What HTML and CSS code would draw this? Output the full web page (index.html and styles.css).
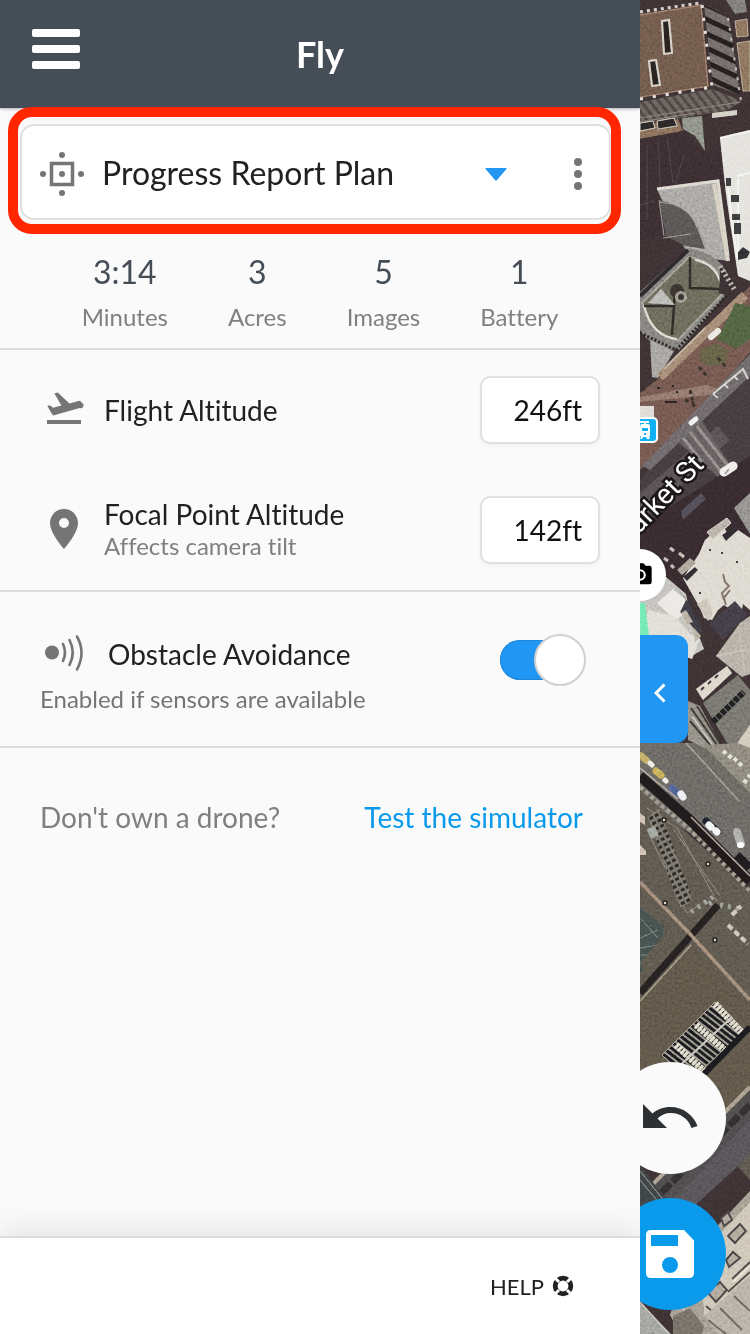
FILE: index.html
```html
<!DOCTYPE html>
<html lang="en">
<head>
<meta charset="utf-8">
<meta name="viewport" content="width=device-width, initial-scale=1">
<title>Fly</title>
<link rel="stylesheet" href="styles.css">
</head>
<body>
<div class="app">
  <main class="panel">
    <header class="topbar">
      <button class="menu" type="button" aria-label="Menu"><span></span><span></span><span></span></button>
      <h1 class="title">Fly</h1>
    </header>

    <div class="highlight">
      <div class="plan">
        <svg class="plan-icon" viewBox="0 0 44 44" aria-hidden="true">
          <rect x="11.500" y="11.500" width="21" height="21" fill="none" stroke="#757575" stroke-width="3.500"/>
          <g fill="#757575"><circle cx="22" cy="22" r="3"/><circle cx="22" cy="3" r="3"/><circle cx="22" cy="41" r="3"/><circle cx="3" cy="22" r="3"/><circle cx="41" cy="22" r="3"/></g>
        </svg>
        <button class="plan-select" type="button">
          <span>Progress Report Plan</span>
          <svg class="caret" viewBox="0 0 22 13" aria-hidden="true"><path d="M1 0h20q1 0 .4 1L12 12q-1 1-2 0L.6 1Q0 0 1 0z" fill="#2196f3"/></svg>
        </button>
        <button class="more" type="button" aria-label="More"><span></span><span></span><span></span></button>
      </div>
    </div>

    <dl class="stats">
      <div><dd>3:14</dd><dt>Minutes</dt></div>
      <div><dd>3</dd><dt>Acres</dt></div>
      <div><dd>5</dd><dt>Images</dt></div>
      <div><dd>1</dd><dt>Battery</dt></div>
    </dl>

    <section class="section">
      <div class="row">
        <svg class="row-icon" viewBox="0 0 40 40" fill="#757575" aria-hidden="true">
          <path d="M3 30h34v4H3z"/>
          <path d="M37.600 12.800a2.600 2.600 0 0 0-3.200-1.800l-9 2.400L13.800 2.500l-3.400 1 7 12.100-8.300 2.200-3.300-2.600-2.500.7 4.400 7.600 1.400 2 26.700-7.500a2.600 2.600 0 0 0 1.800-5.200z"/>
        </svg>
        <label class="label" for="flight">Flight Altitude</label>
        <input class="value" id="flight" type="text" value="246ft">
      </div>
      <div class="row">
        <svg class="row-icon" viewBox="0 0 40 40" fill="#757575" aria-hidden="true">
          <path fill-rule="evenodd" d="M20-1C12.200-1 6 5.200 6 13c0 10.500 14 26 14 26s14-15.500 14-26C34 5.200 27.800-1 20-1zm0 19a5 5 0 1 1 0-10 5 5 0 0 1 0 10z"/>
        </svg>
        <label class="label" for="focal">Focal Point Altitude<small>Affects camera tilt</small></label>
        <input class="value" id="focal" type="text" value="142ft">
      </div>
    </section>

    <section class="section obstacle">
      <div class="obstacle-text">
        <label class="obstacle-label" for="avoid">
          <svg class="row-icon" viewBox="0 0 40 40" aria-hidden="true">
            <circle cx="8" cy="18.500" r="7" fill="#757575"/>
            <path d="M19 10q4 8.500 0 17M25.500 6q6.500 12.500 0 25M33 2.500q9 16 0 33" fill="none" stroke="#757575" stroke-width="2.600" stroke-linecap="round"/>
          </svg>
          Obstacle Avoidance
        </label>
        <p>Enabled if sensors are available</p>
      </div>
      <input class="switch" id="avoid" type="checkbox" role="switch" checked>
    </section>

    <div class="simulator">
      <span>Don't own a drone?</span>
      <a href="#simulator">Test the simulator</a>
    </div>

    <footer class="footer">
      <button class="help" type="button">HELP
        <svg viewBox="0 0 22 22" aria-hidden="true">
          <circle cx="11" cy="11" r="7.800" fill="none" stroke="#212121" stroke-width="4.800"/>
          <path d="M2 2l5 5M20 2l-5 5M2 20l5-5M20 20l-5-5" stroke="#fff" stroke-width="3"/>
        </svg>
      </button>
    </footer>
  </main>

  <aside class="map" aria-label="Map">
    <svg class="imagery" viewBox="0 0 110 1334" preserveAspectRatio="xMinYMin slice" aria-hidden="true">
      <defs>
        <pattern id="slatA" width="12" height="13" patternUnits="userSpaceOnUse" patternTransform="rotate(25)"><rect width="12" height="13" fill="#605b5a"/><rect width="12" height="5" fill="#201a1a"/></pattern>
        <pattern id="slatB" width="7" height="9" patternUnits="userSpaceOnUse" patternTransform="rotate(-38)"><rect width="7" height="9" fill="#5a5450"/><rect width="3" height="9" fill="#423b38"/></pattern>
        <pattern id="slatC" width="5" height="5" patternUnits="userSpaceOnUse" patternTransform="rotate(38)"><rect width="5" height="5" fill="#858078"/><rect width="5" height="3" fill="#16171a"/></pattern>
        <pattern id="slatD" width="6" height="6" patternUnits="userSpaceOnUse" patternTransform="rotate(62)"><rect width="6" height="6" fill="#69655e"/><rect width="3" height="4" fill="#25231f"/></pattern>
        <pattern id="cross" width="9" height="9" patternUnits="userSpaceOnUse" patternTransform="rotate(52)"><rect width="9" height="9" fill="#565052"/><rect width="9" height="3" fill="#7c7774"/></pattern>
        <filter id="grain" x="0" y="0" width="100%" height="100%"><feTurbulence type="fractalNoise" baseFrequency=".4" numOctaves="3" seed="4"/><feColorMatrix type="saturate" values="0"/><feComponentTransfer><feFuncA type="linear" slope="0" intercept="1"/></feComponentTransfer></filter>
      </defs>
      <g class="land">
        <rect width="110" height="1334" fill="#342a2c"/>
        <!-- brown roof with vents and louvred edges -->
        <path d="M0 15L60 5l8 80-68 11z" fill="#604d41"/>
        <path d="M0 15L61 5l7 81-68 11" fill="none" stroke="#8a6c5c" stroke-width="1.500"/>
        <path d="M0 12L60 3" stroke="#c7c2b8" stroke-width="3" stroke-dasharray="3 4"/>
        <path d="M0 99L72 87M62 5l10 82" stroke="#ded9cf" stroke-width="3" stroke-dasharray="3 10"/>
        <path d="M22 21l7-1 3 33-8 1zM9 61l7-1 4 25-8 1z" fill="#221d1b" stroke="#cfc8bb" stroke-width="2"/>
        <path d="M64 5l25 13 11 77-27-10z" fill="url(#slatA)"/>
        <path d="M88 18l13 83" stroke="#a9a49d" stroke-width="2" stroke-dasharray="3 7"/>
        <path d="M0 102l72-13 30 12-14 9-88 15z" fill="url(#slatB)"/>
        <path d="M86 0h19l2 12-12 2z" fill="#6b6a67"/>
        <path d="M95 21l12-2 1 17-11 1zM97 43l13-2v50h-7z" fill="#76624f" stroke="#a29381"/>
        <path d="M0 118l100-16M0 122l55-9" stroke="#787067" stroke-width="1"/>
        <path d="M0 126l38-7 5 12-43 8z" fill="#745e4c"/>
        <path d="M0 123l13-2 2 7-15 3zM17 121l17-3 3 8-19 3z" fill="#242222" stroke="#c0b8ab"/>
        <path d="M42 118l20-2 3 35-10-15-12-7z" fill="#797b73"/>
        <path d="M72 113l25-3v5l-25 3z" fill="#c9c4b9"/>
        <path d="M0 139l43-8 20 20h17l3 33-66 5 4 46-21 5z" fill="#32272a"/>
        <path d="M18 139l3 60M27 137l6 46M44 155l-9 30M0 205l14-4M7 145v75" stroke="#453a3d"/>
        <!-- pale buildings -->
        <path d="M80 138l30-7v150l-12-5-12-82z" fill="#dedcd5"/>
        <path d="M80 138l30-7M97 176l13-3M98 179v80M88 188l9 70" stroke="#f2f1ec" stroke-width="2" fill="none"/>
        <path d="M86 178h5v8h-5zM91 195h8v7h-8zM92 214h8v6h-8zM94 223h7v11h-7z" fill="#343436"/>
        <path d="M98 252l5-5 7 5-3 6-9 2z" fill="#29292b"/>
        <path d="M17 189l61-8 11 80-16-2-27-8z" fill="#96948f"/>
        <path d="M17 189l61-8 10 75" fill="none" stroke="#d6d1c5" stroke-width="3"/>
        <path d="M74 184l14 77" stroke="#cec6b5" stroke-width="4"/>
        <path d="M19 200q24 5 33 18 5 8 13 31l-20-3-19-10z" fill="#4c4949"/>
        <path d="M20 202q24 2 33 17 5 8 13 28M23 238l28-4M19 200l5 36" fill="none" stroke="#898681"/>
        <!-- courtyard -->
        <path d="M0 292l48-44q40 7 43 41l-52 61q-29-2-39-20z" fill="#6f6e6a"/>
        <path d="M2 303l47-46q31 5 37 33l-48 50Q11 337 2 303z" fill="#5b5b4e" stroke="#908a81" stroke-width="2"/>
        <path d="M4 305q7 31 33 34M55 260q23 4 27 29" stroke="#dbd7cf" stroke-width="2" fill="none"/>
        <path d="M0 296l48-46" stroke="#262225" stroke-width="4"/>
        <path d="M50 257v31l31 1M35 290l-3 45M4 306h31" stroke="#292420" stroke-width="2.500" fill="none"/>
        <path d="M8 303l13-14 14 16z" fill="#aaa9a5"/>
        <circle cx="37" cy="291" r="7" fill="#302c29"/><circle cx="41" cy="297" r="4.500" fill="#2f2a28" stroke="#8a837d" stroke-width="3"/>
        <path d="M0 333l36 17 54-58" stroke="#211f1f" stroke-width="3" stroke-dasharray="2 2" fill="none"/>
        <path d="M80 265l14 19-6 12-9-3z" fill="#31292b"/>
        <path d="M80 266l14 23" stroke="#aca5a0" stroke-width="5" stroke-dasharray="2 3"/>
        <path d="M10 340l24 11-16 27-6-1z" fill="#92908d"/>
        <!-- brick plaza and trees -->
        <path d="M19 378l91-92v82l-40 40-70 62v-77z" fill="#634b44"/>
        <path d="M20 377l85-82" stroke="#8e7564" stroke-width="9"/>
        <path d="M24 369l42-42" stroke="#bbaa96" stroke-width="1.500"/>
        <path d="M0 397l66-12 24 8-90 9z" fill="#7c665d"/>
        <path d="M91 312l4-9 15 3v33l-14 10-19-10z" fill="#465437"/>
        <path d="M61 350l14-7 14 8-4 13-16 2-10-6z" fill="#56533c"/>
        <path d="M71 337l7-6" stroke="#e6e3dd" stroke-width="6" stroke-linecap="round"/>
        <path d="M59 367l9 10M78 358l8 9M45 400l9 3M50 390l4 17" stroke="#332927" stroke-width="3" stroke-dasharray="4 3"/>
        <path d="M3 389h2M17 388h3M32 386h2M36 392h2M25 402h12" stroke="#251e1e" stroke-width="2"/>
        <path d="M0 406h14v13H0z" fill="#d8d4cd"/>
        <!-- main street -->
        <path d="M110 352v134L0 576V480z" fill="#3a3336"/>
        <path d="M110 354v22L10 470l-8-4z" fill="#5e595b"/>
        <path d="M0 493l78-67 12 14L0 523z" fill="#4c4549"/>
        <path d="M38 442l24-21 32 50-10 11z" fill="url(#cross)"/>
        <path d="M73 394l30-25 5 10" stroke="#cac5bc" stroke-width="2" fill="none"/>
        <path d="M73 394l5 4M84 384l4 4M94 376l4 4" stroke="#ddd" stroke-width="1.500"/>
        <path d="M51 423l5-4" stroke="#eee" stroke-width="5" stroke-linecap="round"/>
        <path d="M0 526L110 456v90l-60 50-50 10z" fill="#2f2428"/>
        <path d="M84 472l9-6" stroke="#edebe7" stroke-width="9" stroke-linecap="round"/><path d="M85 474l4-5" stroke="#8a868a" stroke-width="2"/>
        <path d="M41 511l20-18 5 6-23 21z" fill="#45424b"/>
        <path d="M94 508l16-15v41z" fill="#7c7b78"/>
        <path d="M30 548l4 3M24 558l4 3M39 553l5 4M31 565l3 3" stroke="#b4aaa0" stroke-width="3"/>
        <!-- jagged pale roof -->
        <path d="M43 578l16-24 6-14 16-14 4 3 4 8 9-7 12 8v72l-7-6-3 14-10-9-6-4-6 5-6 10-8-2-4-10z" fill="#d6d1c6"/>
        <path d="M67 532l20-14 4 5-8 7-10 9z" fill="#a49d92" stroke="#cfc9bd"/>
        <path d="M37 570l13-12 6 5-14 12z" fill="#988f83"/>
        <path d="M43 577l12-10 3 3-11 11zM82 535l12-8 4 3-12 11z" fill="#29252a"/>
        <path d="M83 574l2 8 4 4-7 7 2 7M90 590l-6 8 2 7" stroke="#6a5c56" stroke-width="2" fill="none"/>
        <circle cx="70" cy="550" r="1"/><circle cx="60" cy="593" r="1"/><circle cx="82" cy="553" r="1"/><circle cx="97" cy="562" r="1"/>
        <path d="M57 604l10-6 6 16-5 7z" fill="#c0b9aa"/>
        <!-- lower pale building -->
        <path d="M0 577h26l20 17 4 19 14 36-16 9-48-20z" fill="#b7b4ae"/>
        <path d="M17 603l16-14 14 12-2 13-10 6z" fill="#e6e4de"/>
        <path d="M8 610l27 6 15 18 10 5-8 20-50-20z" fill="#d9d6cc"/>
        <path d="M35 585l14 18 14 28-3 5-20-24 6-12z" fill="#34333b"/>
        <path d="M41 613l5-3 7 12-6 2zM53 627l8 9-6 6" fill="#a89f8d"/>
        <path d="M0 603h5l5 40H0z" fill="#62e5a2"/>
        <path d="M69 623l26-22 12 14-24 25z" fill="#38343c"/>
        <path d="M76 656l24-33 10-7v58l-8 3z" fill="#a6a093"/>
        <path d="M76 656l34-7M98 627l7 45" stroke="#c0b9aa"/>
        <path d="M56 689l31-23 5 7-29 27z" fill="#d4cebf"/><path d="M61 690l3-3M68 684l3-3M75 678l3-3" stroke="#332f30" stroke-width="2"/>
        <path d="M0 743h64l46 50v80L0 800z" fill="#5b5955"/>
        <path d="M63 703l35-28 12 15v54l-15 12z" fill="#66645f"/>
        <path d="M73 722l31-30" stroke="#1b1b1d" stroke-width="6" stroke-dasharray="5 1"/>
        <path d="M48 701l12 5 29 54-41-20z" fill="#7c7972"/>
        <path d="M51 708l33 47M57 706l31 51M50 721l27 32" stroke="#35322f" stroke-width="2"/>
        <path d="M52 716l24 34" stroke="#bcb7ad" stroke-width="1.500"/>
        <path d="M98 742l12-17v35l-10-4z" fill="#c7bfad"/>
        <!-- avenue with parked cars -->
        <path d="M63 745l47 48v-45l-12-5z" fill="#77736a"/>
        <path d="M46 743l53 58" stroke="#8d867d" stroke-width="1.500"/>
        <path d="M83 751l10 8M94 758l8 8M104 783l6-8" stroke="#ddd8cf" stroke-width="4" stroke-dasharray="4 3"/>
        <g stroke-linecap="round" stroke-width="7"><path d="M1 756l5 4" stroke="#b49c57"/><path d="M16 771l5 4" stroke="#b99c4b"/><path d="M32 788l6 5" stroke="#47547e"/><path d="M41 794l2 3" stroke="#e9eaf0"/></g>
        <path d="M10 763l2 2M25 780l1 1" stroke="#eae8dc" stroke-width="5" stroke-linecap="round"/>
        <path d="M66 821l12 11" stroke="#171b25" stroke-width="7" stroke-linecap="round"/><path d="M69 825l2 2M76 831l1 1" stroke="#f1f2f3" stroke-width="7" stroke-linecap="round"/>
        <path d="M97 832l4 12" stroke="#9b9b9a" stroke-width="8" stroke-linecap="round"/><path d="M100 845h1" stroke="#fff" stroke-width="6" stroke-linecap="round"/>
        <path d="M97 855l13 13" stroke="#1a171a" stroke-width="8"/>
        <!-- lower roofs -->
        <path d="M0 790l110 100v290L0 1060z" fill="#504b43"/>
        <path d="M0 776l50 44 60 61" stroke="#1b1618" stroke-width="10" fill="none"/>
        <path d="M0 768l38 31M51 817l59 59" stroke="#a0968d" stroke-width="1.500"/>
        <path d="M0 787l50 43 60 61" stroke="#8c847b" stroke-width="4" stroke-dasharray="4 3" fill="none"/>
        <path d="M7 808l30 20 37 68M7 830l40 83 14-9M34 830l46 66" fill="none" stroke="#79736a"/>
        <path d="M8 817l11-9 34 92-13 8z" fill="url(#slatD)"/>
        <path d="M7 829l8-3 4 10-8 3z" fill="#8a8d85"/>
        <path d="M0 813l5 4v8l-5-3zM0 845l6 6v4H0z" fill="#c5b1a1"/>
        <path d="M51 912l22-15M69 904l7-5M80 905l20 4" stroke="#858982" stroke-width="5" stroke-dasharray="3 5"/>
        <path d="M92 915l9-9M88 925l20 19" stroke="#c4baab" stroke-width="4" stroke-dasharray="6 3"/>
        <path d="M0 908l25 19-8 28-17 18z" fill="#3b4543"/>
        <path d="M0 938l18-8M0 948l17-3M0 955h15M0 962l12 3M0 918l18 20" stroke="#68736f"/>
        <path d="M0 993l78-88" stroke="#201c1c" stroke-width="7"/>
        <path d="M0 963l31-37 4 5-31 40z" fill="#504b42"/>
        <path d="M0 882l50 52 60 66" stroke="#8a7768" stroke-width="3.500" fill="none"/>
        <g fill="#d8d5ce" stroke="#1d1b19" stroke-width="1.500"><circle cx="24" cy="820" r="2"/><circle cx="68" cy="864" r="2"/><circle cx="25" cy="903" r="2"/><circle cx="75" cy="940" r="2"/></g>
        <path d="M0 1002l51-57 59 60v88L50 1170 0 1120z" fill="#514a3e"/>
        <path d="M0 1001l51-56" stroke="#8e8474" stroke-width="1.500"/>
        <path d="M22 1055l53-53 30 29-56 50z" fill="url(#slatC)" stroke="#a09b8c"/>
        <path d="M75 1004l27 29M56 1025l30 26M36 1045l28 26" stroke="#dcd5c2" stroke-width="7" stroke-dasharray="3 1"/>
        <path d="M34 1071l58-54" stroke="#bbb7ad" stroke-width="2"/>
        <path d="M110 1027l-49 50" stroke="#17171a" stroke-width="6"/>
        <path d="M110 1091L0 1200v44l110-107z" fill="#444042"/>
        <path d="M110 1087L0 1197" stroke="#96897a" stroke-width="4"/>
        <path d="M110 1105L0 1214" stroke="#2b282a" stroke-width="7" stroke-dasharray="13 3"/>
        <path d="M110 1120L0 1235v21l110-101z" fill="#4b474b"/>
        <path d="M0 1165l30 40-30 9z" fill="#353a3b"/><path d="M0 1171l25 31M0 1180l20 24" stroke="#82867f"/>
        <path d="M110 1191L50 1255l-20 60 10 19h70z" fill="#8f887c"/>
        <path d="M110 1202l-29 31-19 45 2 38 46-25z" fill="#c3b9a7"/>
        <path d="M81 1218l7-6 4 8-8 6zM88 1236l12-12 6 7-11 12zM67 1292l13-10 7 8-11 12zM86 1260l7-8 7 6-11 9z" fill="#9d9485" stroke="#3d393a" stroke-width="2"/>
        <path d="M92 1279l18-17M88 1292l22-20M66 1306l18 16 12-14" stroke="#423e3e" stroke-width="2" fill="none"/>
        <path d="M93 1282l17-16M99 1293l11-10" stroke="#e5ddcc" stroke-width="2" fill="none"/>
        <path d="M0 1303l31 31H0z" fill="#8d8d8b"/><path d="M0 1302l29 32M43 1308l10 26" stroke="#c0bcb4" stroke-width="1.500"/>
        <path d="M33 1334v-18l17-8 14 18-2 8z" fill="#655f58"/>
        <path d="M64 1316l46-40v58H78z" fill="#a79f91"/>
        <path d="M68 1320l18 14M80 1308l22 22M94 1296l16 15" stroke="#5c5650" stroke-width="2"/>
      </g>
      <rect class="noise" width="110" height="1334" filter="url(#grain)"/>
      <text class="street" x="65" y="466" transform="rotate(-46 65 466)">Market St</text>
    </svg>

    <svg class="pin transit" viewBox="0 0 26 26" aria-hidden="true">
      <rect x="1" y="1" width="24" height="24" rx="4" fill="#12b1f3" stroke="#fff" stroke-width="2"/>
      <path d="M8 5h9M13 5v4" stroke="#fff" stroke-width="2"/>
      <path fill="#fff" fill-rule="evenodd" d="M10 7h6q2 0 2 3v8q0 1-1 2l1 2h-3l-1-2h-3l-1 2H8l1-2q-1-1-1-2v-8q0-3 2-3zm0 4v3h6v-3zm2 5v2h2v-2z"/>
    </svg>
    <span class="pin camera">
      <svg viewBox="0 0 24 24" aria-hidden="true"><path fill="#000" fill-rule="evenodd" d="M9 2L7.200 4H4a2 2 0 0 0-2 2v12c0 1.100.9 2 2 2h16a2 2 0 0 0 2-2V6a2 2 0 0 0-2-2h-3.200L15 2zm3 15a5 5 0 1 1 0-10 5 5 0 0 1 0 10z"/><circle cx="12" cy="12" r="3.200"/></svg>
    </span>
    <button class="collapse" type="button" aria-label="Collapse panel">
      <svg viewBox="0 0 12 20" aria-hidden="true"><path d="M10.500 1.500L2 10l8.500 8.500" fill="none" stroke="#fff" stroke-width="3"/></svg>
    </button>
    <div class="actions">
      <button class="round undo" type="button" aria-label="Undo">
        <svg viewBox="0 0 56 28" aria-hidden="true"><path fill="#2e3133" d="M28.500 3C21 3 15 5.500 10.500 9.500L1 0v24h24l-9.500-9.500C19 11 23.500 9 28.500 9 38.500 9 46.500 15 49.500 24l6-2C51.500 11 41 3 28.500 3z"/></svg>
      </button>
      <button class="round save" type="button" aria-label="Save">
        <svg viewBox="0 0 48 48" aria-hidden="true"><path fill="#fff" fill-rule="evenodd" d="M5 0h33l10 10.500V43q0 5-5 5H5q-5 0-5-5V5q0-5 5-5zm0 5v11h27V5zm19 22a8 8 0 1 0 0 16 8 8 0 0 0 0-16z"/></svg>
      </button>
    </div>
  </aside>
</div>
</body>
</html>
```
FILE: styles.css
```css
* { box-sizing: border-box; }

body {
  margin: 0;
  font-family: Lato, "Open Sans", sans-serif;
  font-size: 28px;
  font-variant-ligatures: none;
  color: #212121;
  background: #fafafa;
}

button, input { font: inherit; font-variant-ligatures: none; color: inherit; }
button { padding: 0; border: 0; background: none; cursor: pointer; }
svg { display: block; flex: none; }

.app {
  display: grid;
  grid-template-columns: minmax(0, 1fr) 110px;
  min-height: 100vh;
}

.panel {
  display: flex;
  flex-direction: column;
  background: #fafafa;
}

.topbar {
  display: grid;
  grid-template-columns: 48px 1fr 48px;
  align-items: center;
  height: 108px;
  padding: 0 32px 10px;
  color: #fff;
  background: #454d56;
  box-shadow: 0 1px 3px rgba(0, 0, 0, .3);
}
.menu { display: grid; gap: 8px; }
.menu span { height: 8px; border-radius: 2px; background: #fff; }
.title {
  margin: 0;
  padding-top: 10px;
  font-size: 36px;
  line-height: 44px;
  font-weight: 700;
  text-align: center;
}

.highlight {
  position: relative;
  margin: -1px 19px 0 8px;
  padding: 7px 0 4px 2px;
  border: 10px solid #ff2600;
  border-radius: 24px;
}
.plan {
  display: flex;
  align-items: center;
  height: 96px;
  padding: 0 15px 0 18px;
  background: #fff;
  border: 2px solid #e0e0e0;
  border-radius: 14px;
}
.plan-icon { width: 44px; height: 44px; margin-top: 4px; }
.plan-select {
  display: flex;
  flex: 1;
  align-items: center;
  justify-content: space-between;
  margin-left: 18px;
  font-size: 32px;
}
.caret { width: 22px; height: 13px; margin-top: 4px; }
.more {
  display: grid;
  justify-items: center;
  gap: 4px;
  width: 32px;
  margin: 4px 0 0 55px;
}
.more span { width: 8px; height: 8px; border-radius: 50%; background: #757575; }

.stats {
  display: flex;
  justify-content: center;
  gap: 60px;
  margin: 0;
  padding: 15px 0 13px;
  border-bottom: 2px solid #dcdcdc;
}
.stats div { display: flex; flex-direction: column; gap: 4px; text-align: center; }
.stats dd { margin: 0; font-size: 32px; line-height: 46px; color: #454d56; }
.stats dt { font-size: 24px; line-height: 36px; color: #808080; }

.section { border-bottom: 2px solid #dcdcdc; }
.row {
  display: flex;
  align-items: center;
  height: 120px;
  padding: 0 40px 0 44px;
}
.row-icon { width: 40px; height: 40px; overflow: visible; }
.label { flex: 1; margin-left: 20px; line-height: 32px; }
.label small { display: block; font-size: 24px; line-height: 32px; color: #808080; }
.value {
  width: 120px;
  height: 68px;
  padding: 0 16px;
  text-align: right;
  color: #111;
  background: #fff;
  border: 2px solid #e0e0e0;
  border-radius: 10px;
  box-shadow: 0 2px 4px rgba(0, 0, 0, .04);
}

.obstacle {
  display: flex;
  align-items: flex-start;
  justify-content: space-between;
  height: 156px;
  padding: 40px 54px 0 40px;
}
.obstacle-label {
  display: flex;
  align-items: center;
  gap: 24px;
  padding-left: 4px;
  line-height: 44px;
}
.obstacle p { margin: 5px 0 0; font-size: 24px; line-height: 36px; color: #757575; }
.switch {
  appearance: none;
  position: relative;
  width: 86px;
  height: 52px;
  margin: 2px 0 0;
}
.switch::before {
  content: "";
  position: absolute;
  inset: 6px 6px 6px 0;
  border-radius: 20px;
  background: #bdbdbd;
}
.switch:checked::before { background: #2196f3; box-shadow: inset 0 0 0 1px #1f87d8; }
.switch::after {
  content: "";
  position: absolute;
  inset: 0 34px 0 0;
  border: 2px solid #d0d0d0;
  border-radius: 50%;
  background: #fff;
}
.switch:checked::after { inset: 0 0 0 34px; }

.simulator {
  display: flex;
  align-items: center;
  justify-content: space-between;
  padding: 48px 57px 0 40px;
  line-height: 42px;
  color: #808080;
}
.simulator a { color: #0a9aec; text-decoration: none; }

.footer {
  display: flex;
  align-items: center;
  justify-content: flex-end;
  height: 98px;
  margin-top: auto;
  padding-right: 66px;
  background: #fff;
  border-top: 2px solid #dcdcdc;
  box-shadow: 0 -4px 32px rgba(0, 0, 0, .1);
  clip-path: inset(-48px 0 0 0);
}
.help { display: flex; align-items: center; gap: 8px; font-size: 22px; }
.help svg { width: 22px; height: 22px; }

.map { position: relative; overflow: hidden; background: #342d2d; }
.imagery { position: absolute; inset: 0; width: 100%; height: 100%; }
.noise { mix-blend-mode: overlay; opacity: .5; }
.street {
  font: 400 28px Roboto, sans-serif;
  fill: #fff;
  stroke: #1b1718;
  stroke-width: 5px;
  paint-order: stroke;
  text-anchor: end;
}

.pin { position: absolute; }
.transit { left: -8px; top: 417px; width: 26px; height: 26px; }
.camera {
  display: grid;
  place-items: center;
  left: -26px;
  top: 549px;
  width: 52px;
  height: 52px;
  border-radius: 50%;
  background: #fff;
}
.camera svg { width: 28px; height: 28px; }
.collapse {
  position: absolute;
  display: grid;
  place-items: center;
  left: 0;
  top: 635px;
  width: 48px;
  height: 108px;
  padding: 8px 8px 0 0;
  border-radius: 0 12px 12px 0;
  background: #2196f3;
}
.collapse svg { width: 12px; height: 20px; }
.actions {
  position: absolute;
  left: -26px;
  bottom: 24px;
  display: grid;
  gap: 24px;
}
.round {
  display: grid;
  place-items: center;
  width: 112px;
  height: 112px;
  border-radius: 50%;
}
.undo { background: #fafafa; }
.undo svg { width: 56px; height: 28px; }
.save { background: #0a9aec; }
.save svg { width: 48px; height: 48px; }
```
